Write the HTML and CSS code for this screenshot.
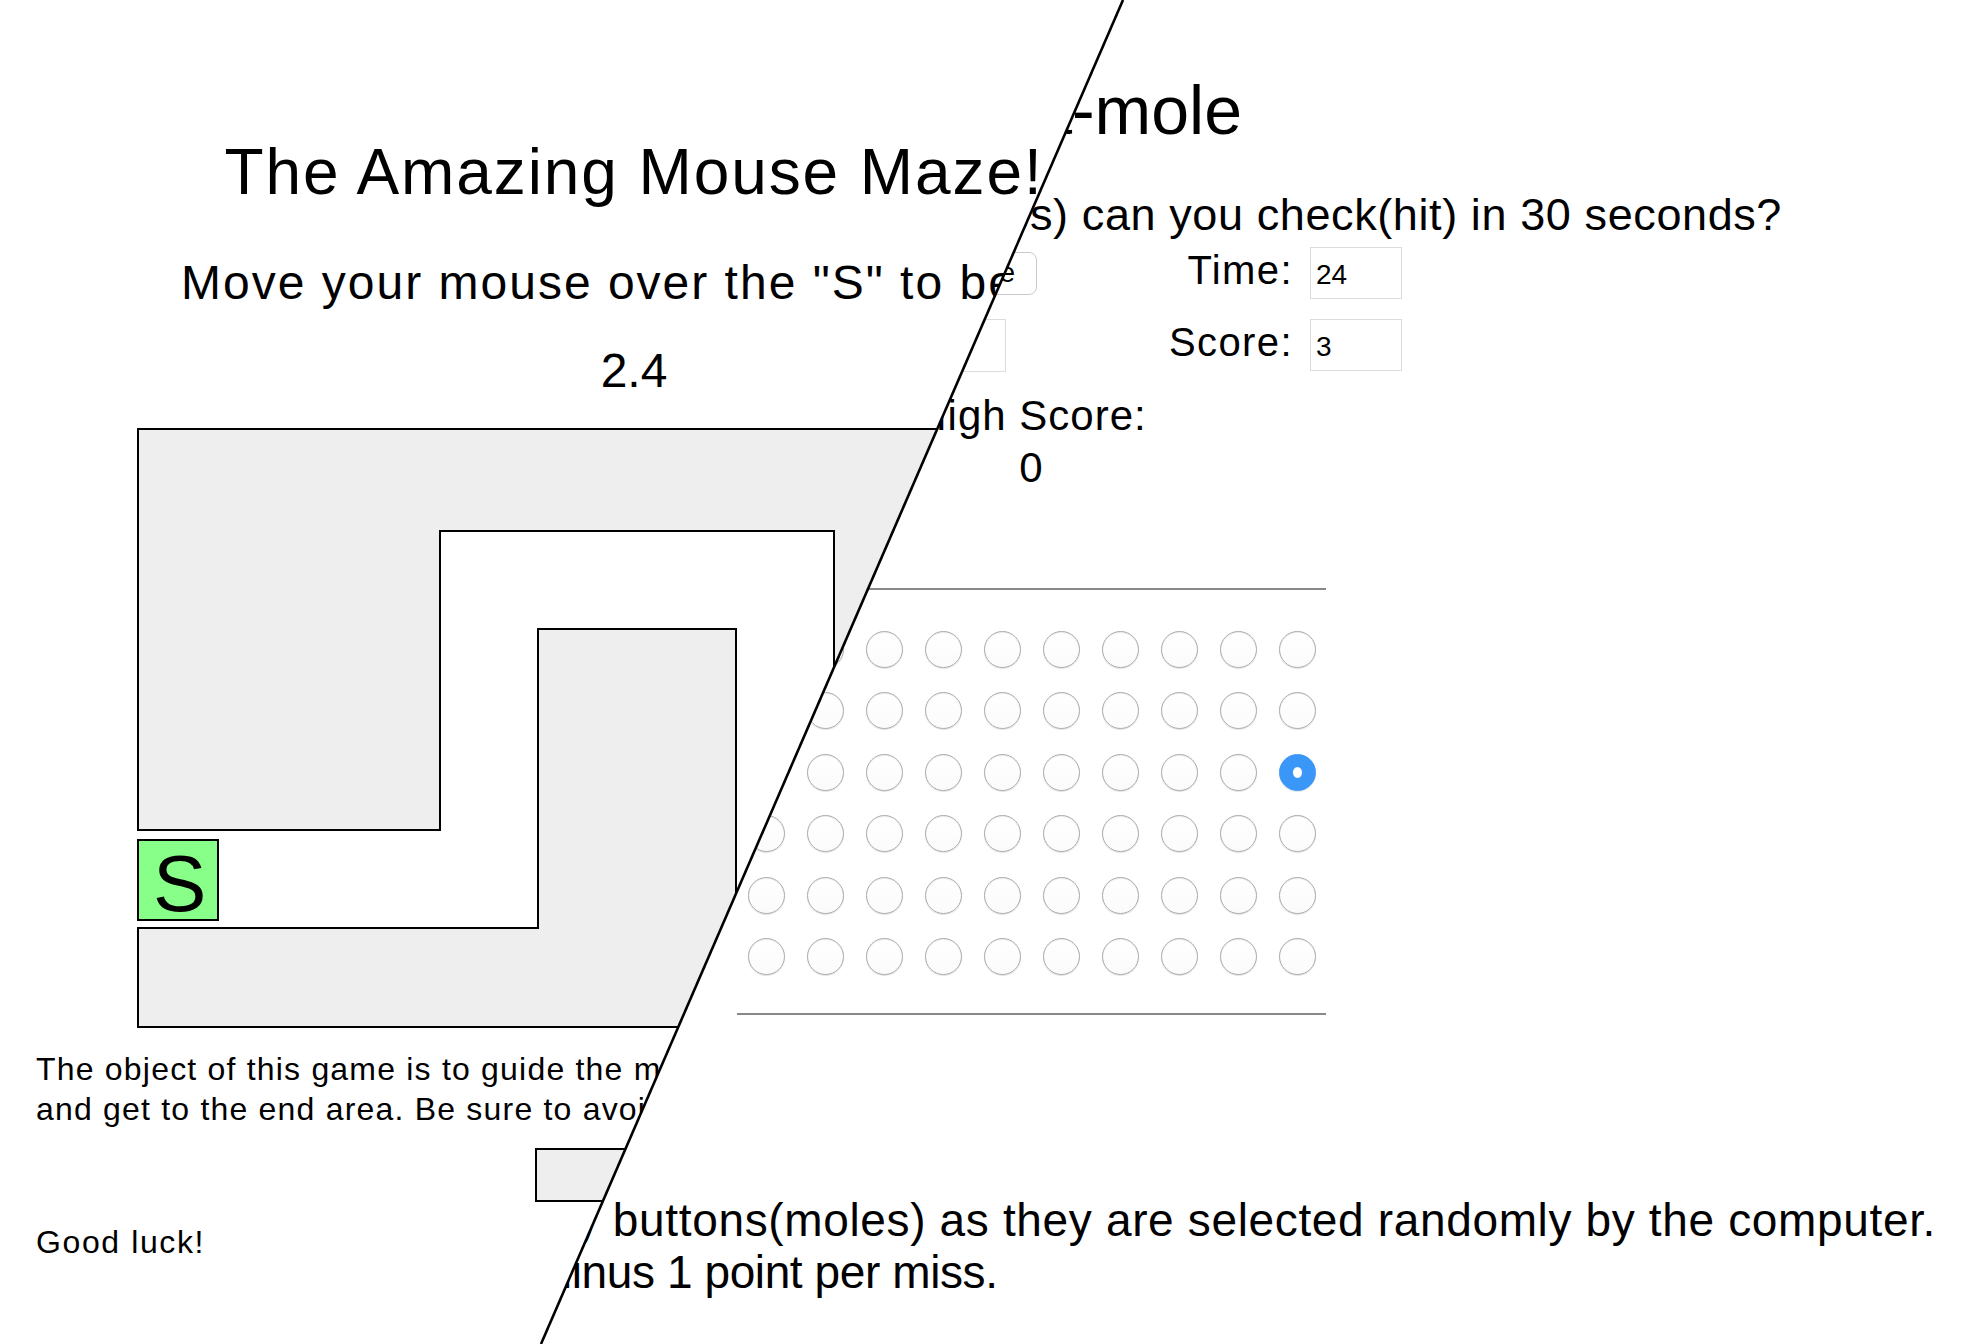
FILE: index.html
```html
<!DOCTYPE html>
<html lang="en">
<head>
    <meta charset="UTF-8">
    <title>Mouse Maze / Whack-a-mole</title>

    <link rel="stylesheet" href="styles.css">
</head>
<body>
<div class="compare">

    <!-- whack-a-mole page, lies underneath -->
    <div class="mole-page">
        <h1 class="mole-title">Whack-a-mole</h1>
        <p class="mole-intro">How many buttons(moles) can you check(hit) in 30 seconds?</p>
        <div class="controls">
            <div class="cell-left"><button class="start">Start Game</button></div>
            <label class="field-label">Time:</label>
            <input class="field" type="text" value="24">
            <div class="cell-left"><input class="field name" type="text"></div>
            <label class="field-label">Score:</label>
            <input class="field" type="text" value="3">
        </div>
        <div class="high">High Score:<br>0</div>
        <form class="board">
            <input type="radio" name="mole"><input type="radio" name="mole"><input type="radio" name="mole"><input type="radio" name="mole"><input type="radio" name="mole">
            <input type="radio" name="mole"><input type="radio" name="mole"><input type="radio" name="mole"><input type="radio" name="mole"><input type="radio" name="mole">
            <input type="radio" name="mole"><input type="radio" name="mole"><input type="radio" name="mole"><input type="radio" name="mole"><input type="radio" name="mole">
            <input type="radio" name="mole"><input type="radio" name="mole"><input type="radio" name="mole"><input type="radio" name="mole"><input type="radio" name="mole">
            <input type="radio" name="mole"><input type="radio" name="mole"><input type="radio" name="mole"><input type="radio" name="mole"><input type="radio" name="mole">
            <input type="radio" name="mole"><input type="radio" name="mole"><input type="radio" name="mole"><input type="radio" name="mole"><input type="radio" name="mole" checked>
            <input type="radio" name="mole"><input type="radio" name="mole"><input type="radio" name="mole"><input type="radio" name="mole"><input type="radio" name="mole">
            <input type="radio" name="mole"><input type="radio" name="mole"><input type="radio" name="mole"><input type="radio" name="mole"><input type="radio" name="mole">
            <input type="radio" name="mole"><input type="radio" name="mole"><input type="radio" name="mole"><input type="radio" name="mole"><input type="radio" name="mole">
            <input type="radio" name="mole"><input type="radio" name="mole"><input type="radio" name="mole"><input type="radio" name="mole"><input type="radio" name="mole">
            <input type="radio" name="mole"><input type="radio" name="mole"><input type="radio" name="mole"><input type="radio" name="mole"><input type="radio" name="mole">
            <input type="radio" name="mole"><input type="radio" name="mole"><input type="radio" name="mole"><input type="radio" name="mole"><input type="radio" name="mole">
        </form>
        <p class="rules">
            <span class="rules-a">Try to check as many buttons(moles) as they are selected randomly by the computer.</span>
            <span class="rules-b">Get 1 point per hit, minus 1 point per miss.</span>
        </p>
    </div>

    <!-- mouse maze page, cut along the diagonal -->
    <div class="maze-page">
        <div class="maze-inner">
            <h1 class="maze-title">The Amazing Mouse Maze!</h1>
            <h2 class="maze-hint">Move your mouse over the "S" to begin</h2>
            <div class="timer">2.4</div>
            <svg class="maze" width="1002" height="602" viewBox="0 0 1002 602">
                <polygon class="wall" points="2,2 1001,2 1001,403 698,403 698,104 304,104 304,403 2,403"/>
                <polygon class="wall" points="2,501 402,501 402,202 600,202 600,501 1001,501 1001,600 2,600"/>
                <rect class="end-box" x="920" y="413" width="80" height="80"/>
                <text class="start-letter" x="935" y="484">E</text>
                <rect class="start-box" x="2" y="413" width="80" height="80"/>
                <text class="start-letter" x="17" y="484">S</text>
            </svg>
            <p class="maze-text">The object of this game is to guide the mouse through the maze<br>and get to the end area. Be sure to avoid the walls!</p>
            <div class="restart"></div>
            <p class="maze-luck">Good luck!</p>
        </div>
    </div>

    <svg class="divider" width="1964" height="1344">
        <line x1="1123" y1="0" x2="541" y2="1344" stroke="#000" stroke-width="2.6"/>
    </svg>
</div>
</body>
</html>
```

FILE: styles.css
```css
* {font-family: "Liberation Sans", Arial, sans-serif;}
body {margin: 0; background: #fff; color: #000; overflow: hidden;}
.compare {position: relative; width: 1964px; height: 1344px; overflow: hidden;}

/* whack-a-mole */
.mole-page {
        height: 1344px;
        padding-top: 72px;
        box-sizing: border-box;
        clip-path: polygon(1123px 0, 1964px 0, 1964px 1344px, 541px 1344px);
    }
.mole-title {
        margin: 0;
        width: 1242px;
        text-align: right;
        font-size: 68px;
        font-weight: normal;
        line-height: 76px;
    }
.mole-intro {
        margin: 41px 0 0;
        width: 1782px;
        text-align: right;
        font-size: 45px;
        line-height: 52px;
        letter-spacing: .6px;
    }
.controls {
        margin-top: 6px;
        display: grid;
        grid-template-columns: 1037px 273px 92px;
        grid-auto-rows: 52px;
        row-gap: 20px;
    }
.cell-left {display: flex; justify-content: flex-end; align-items: center;}
.start {
        height: 43px;
        padding: 0 21px;
        border: 1px solid #c9c9c9;
        border-radius: 8px;
        background: #fff;
        font-size: 28px;
    }
.field-label {
        padding-right: 17px;
        text-align: right;
        font-size: 40px;
        line-height: 46px;
        letter-spacing: 1.4px;
    }
.field {
        box-sizing: border-box;
        width: 92px;
        height: 52px;
        margin: 0;
        padding: 4px 0 0 5px;
        border: 1px solid #dcdcdc;
        font-size: 28px;
    }
.field.name {width: 200px; height: 53px; margin-right: 31px;}
.high {
        margin: 18.5px 0 0 737px;
        width: 589px;
        text-align: center;
        font-size: 42px;
        line-height: 52px;
        letter-spacing: 1px;
    }
.board {
        margin: 94.5px 0 0 737px;
        width: 589px;
        box-sizing: border-box;
        padding: 40.5px 10.5px 38px;
        border-top: 2px solid #888;
        border-bottom: 2px solid #888;
        display: grid;
        grid-template-columns: repeat(10, 37px);
        column-gap: 22px;
        row-gap: 24.5px;
    }
.board input {
        -webkit-appearance: none;
        appearance: none;
        width: 37px;
        height: 37px;
        margin: 0;
        box-sizing: border-box;
        border-radius: 50%;
        border: 1.5px solid #ababab;
        background: linear-gradient(#fff, #fbfbfb);
        box-shadow: inset 0 1px 1px rgba(0,0,0,.08), 0 1px 1px rgba(0,0,0,.12);
    }
.board input:checked {
        border-color: #3b97f7;
        background: radial-gradient(ellipse 5px 6px, #fff 0 80%, #3b97f7 100%);
        box-shadow: 0 1px 1px rgba(0,0,0,.12);
    }
.rules {margin: 179px 0 0; padding-left: 151px; font-size: 46px; line-height: 52px;}
.rules span {display: block; white-space: nowrap;}
.rules-a {letter-spacing: .65px;}
.rules-b {letter-spacing: -.4px;}

/* mouse maze */
.maze-page {
        position: absolute;
        top: 0;
        left: 0;
        width: 1964px;
        height: 1344px;
        box-sizing: border-box;
        padding: 136px 0 0 36px;
        background: #fff;
        clip-path: polygon(0 0, 1123px 0, 541px 1344px, 0 1344px);
    }
.maze-inner {width: 1196px;}
.maze-title {
        margin: 0;
        text-align: center;
        font-size: 64px;
        font-weight: normal;
        line-height: 72px;
        letter-spacing: 1.9px;
    }
.maze-hint {
        margin: 47px 0 0;
        text-align: center;
        font-size: 48px;
        font-weight: normal;
        line-height: 56px;
        letter-spacing: 2px;
        white-space: nowrap;
    }
.timer {margin-top: 32px; text-align: center; font-size: 48px; line-height: 56px;}
.maze {display: block; margin: 28px 0 0 100px;}
.wall {fill: #eee; stroke: #000; stroke-width: 2;}
.start-box {fill: #88ff88; stroke: #000; stroke-width: 2;}
.end-box {fill: #ff8888; stroke: #000; stroke-width: 2;}
.start-letter {font-size: 80px;}
.maze-text {
        margin: 20px 0 0;
        font-size: 32px;
        line-height: 40px;
        letter-spacing: 1.2px;
        white-space: nowrap;
    }
.restart {
        margin: 19px auto 0;
        width: 198px;
        height: 54px;
        box-sizing: border-box;
        border: 2px solid #000;
        background: #eee;
    }
.maze-luck {margin: 20px 0 0; font-size: 32px; line-height: 40px; letter-spacing: 1.6px;}

.divider {position: absolute; top: 0; left: 0;}
```
